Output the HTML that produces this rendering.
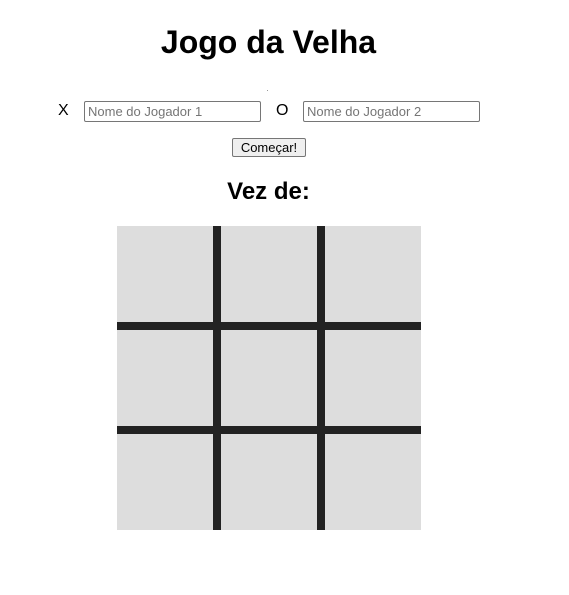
<!DOCTYPE html>
<html><head><style>
body{margin:0;width:569px;height:595px;background:#fff;font-family:"Liberation Sans",Arial,sans-serif;position:relative}
.a{position:absolute}
h1{position:absolute;margin:0;left:0;width:537px;text-align:center;top:24px;font-size:32px;font-weight:bold}
.lbl{font-size:16px;top:102px}
input{position:absolute;box-sizing:border-box;height:21px;top:101px;width:177px;border:1px solid #767676;border-radius:2px;padding:0 3px;font-family:"Liberation Sans",Arial,sans-serif;font-size:13px;color:#757575}
button{position:absolute;left:232px;top:138px;width:74px;height:19px;font-family:"Liberation Sans",Arial,sans-serif;font-size:13px;padding:0;background:#efefef;border:1px solid #767676;border-radius:2px}
h2{position:absolute;margin:0;left:0;width:537px;text-align:center;top:178px;font-size:24px;font-weight:bold}
.b{left:117px;top:226px;width:304px;height:304px;background:#222}
.c{position:absolute;width:96px;height:96px;background:#ddd}
</style></head><body>
<h1>Jogo da Velha</h1>
<div class="a" style="left:267px;top:90px;width:1px;height:1px;background:#999"></div>
<div class="a lbl" style="left:58px">X</div>
<input style="left:84px" value="Nome do Jogador 1">
<div class="a lbl" style="left:276px">O</div>
<input style="left:303px" value="Nome do Jogador 2">
<button>Começar!</button>
<h2>Vez de:</h2>
<div class="a b">
<div class="c" style="left:0;top:0"></div><div class="c" style="left:104px;top:0"></div><div class="c" style="left:208px;top:0"></div>
<div class="c" style="left:0;top:104px"></div><div class="c" style="left:104px;top:104px"></div><div class="c" style="left:208px;top:104px"></div>
<div class="c" style="left:0;top:208px"></div><div class="c" style="left:104px;top:208px"></div><div class="c" style="left:208px;top:208px"></div>
</div>
</body></html>
